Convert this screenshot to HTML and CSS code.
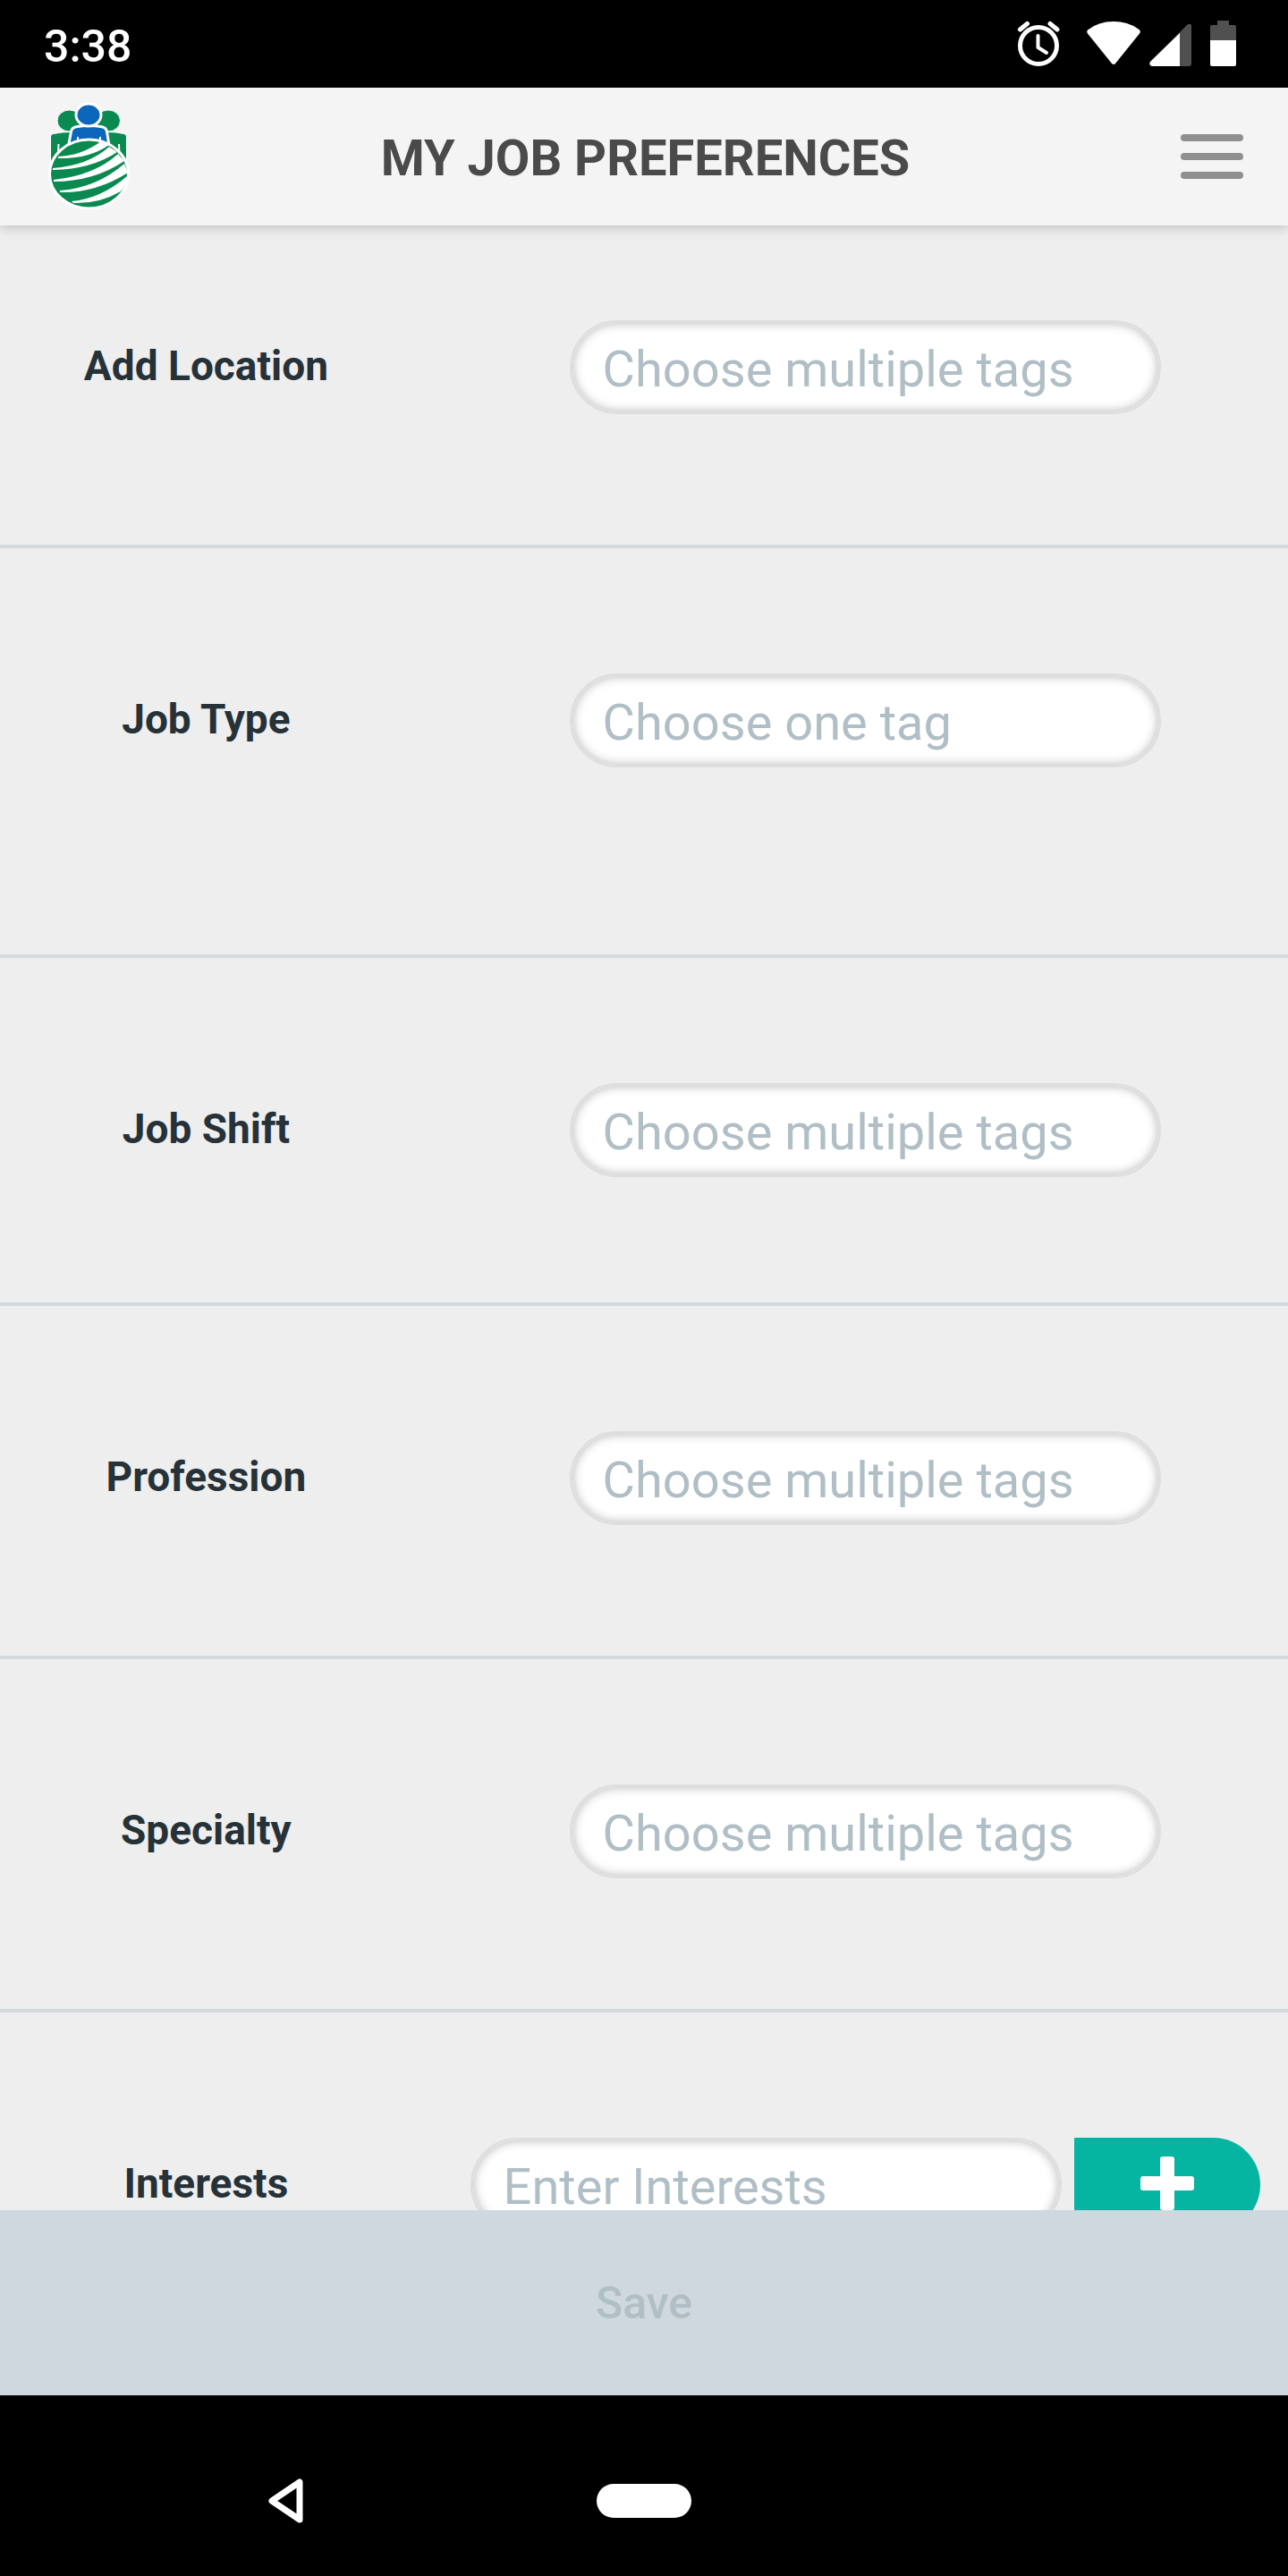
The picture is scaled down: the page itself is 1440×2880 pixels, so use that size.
FILE: index.html
```html
<!DOCTYPE html>
<html lang="en">
<head>
    <meta charset="UTF-8">
    <meta name="viewport" content="width=device-width, initial-scale=1.0">
    <title>My Job Preferences</title>

    <link rel="stylesheet" href="styles.css">
</head>
<body>
    <div class="status-bar">
        <span class="clock">3:38</span>
        <svg class="status-icons" viewBox="0 0 248 54" aria-hidden="true">
            <!-- alarm -->
            <g fill="none" stroke="#fff" stroke-linecap="round">
                <circle cx="25" cy="28" r="20.500" stroke-width="5"/>
                <path d="M24.500 17v13l9.500 6" stroke-width="4" stroke-linejoin="round"/>
                <path d="M4.500 10l8-6.500M46 10l-8-6.500" stroke-width="5"/>
            </g>
            <!-- wifi -->
            <path d="M80 10.500Q92 1 109 1t29 9.500q1.500 2 0 4L111 48q-2 2-4 0L80 14.500q-1.500-2 0-4z" fill="#fff"/>
            <!-- signal -->
            <path d="M150 46L191 5q5-3 5 1v42q0 3-3 3h-41q-4-1-2-5z" fill="#505050"/>
            <path d="M150 46l33-32v37h-31q-4-1-2-5z" fill="#fff"/>
            <!-- battery -->
            <path d="M217 22V7q0-2 2-2h6V0h13v5h6q2 0 2 2v15z" fill="#505050"/>
            <path d="M217 22h29v27q0 2-2 2h-25q-2 0-2-2z" fill="#fff"/>
        </svg>
    </div>

    <header class="header">
        <svg class="logo" viewBox="0 0 92 122" role="img" aria-label="Home">
            <g fill="#0a8a50" stroke="#fff" stroke-width="1">
                <path d="M3.500 67V39q0-3 3-3.500 10-2 19-2h42q10 0 18 2 3 .5 3 3.500v28z"/>
                <ellipse cx="24.500" cy="21" rx="13.500" ry="12"/>
                <ellipse cx="68" cy="21" rx="13.500" ry="12"/>
            </g>
            <path d="M12 60l.5-13M80.500 60l-.5-13" stroke="#fff" stroke-width="2"/>
            <path d="M23 52l3.500-19q1-5 7-5.500 13-2 26 0 6 .5 7 5.500l3 19z" fill="#0b67b9" stroke="#fff" stroke-width="3"/>
            <ellipse cx="46" cy="14.500" rx="14" ry="12.500" fill="#0b67b9" stroke="#fff" stroke-width="3"/>
            <path d="M34 48v-9M59 48v-9" stroke="#fff" stroke-width="2"/>
            <ellipse cx="46.500" cy="80.500" rx="44" ry="38.500" fill="#0a8a50" stroke="#fff" stroke-width="3"/>
            <g fill="#fff">
                <path d="M12 61Q38 60 60 44L69 48Q46 64 12 63z"/>
                <path d="M6 74Q46 71 69 50L78 56Q50 75 6 76z"/>
                <path d="M7 87Q53 82 79 58L86 66Q52 89 7 89z"/>
                <path d="M14 99Q55 96 86 69L90 79Q54 102 14 101z"/>
                <path d="M27 111Q60 108 89 83Q89 93 82 100Q58 114 29 113z"/>
            </g>
        </svg>
        <h1 class="title">MY JOB PREFERENCES</h1>
        <button class="menu" type="button" aria-label="Menu">
            <span class="bar"></span>
            <span class="bar"></span>
            <span class="bar"></span>
        </button>
    </header>

    <form class="preferences" id="preferences">
        <div class="row first">
            <label for="location">Add Location</label>
            <div class="field">
                <input class="tags" id="location" type="text" placeholder="Choose multiple tags">
            </div>
        </div>
        <div class="row tall">
            <label for="job-type">Job Type</label>
            <div class="field">
                <input class="tags" id="job-type" type="text" placeholder="Choose one tag">
            </div>
        </div>
        <div class="row short">
            <label for="job-shift">Job Shift</label>
            <div class="field">
                <input class="tags" id="job-shift" type="text" placeholder="Choose multiple tags">
            </div>
        </div>
        <div class="row">
            <label for="profession">Profession</label>
            <div class="field">
                <input class="tags" id="profession" type="text" placeholder="Choose multiple tags">
            </div>
        </div>
        <div class="row">
            <label for="specialty">Specialty</label>
            <div class="field">
                <input class="tags" id="specialty" type="text" placeholder="Choose multiple tags">
            </div>
        </div>
        <div class="row">
            <label for="interests">Interests</label>
            <div class="field">
                <input class="tags" id="interests" type="text" placeholder="Enter Interests">
                <button class="add" type="button" aria-label="Add interest">
                    <svg viewBox="0 0 60 60" aria-hidden="true">
                        <path d="M25 0h10q3 0 3 3v19h19q3 0 3 3v10q0 3-3 3H38v19q0 3-3 3H25q-3 0-3-3V38H3q-3 0-3-3V25q0-3 3-3h19V3q0-3 3-3z" fill="#fff"/>
                    </svg>
                </button>
            </div>
        </div>
    </form>

    <button class="save" type="submit" form="preferences" disabled>Save</button>

    <nav class="system-nav">
        <button class="back" type="button" aria-label="Back">
            <svg viewBox="0 0 40 50" aria-hidden="true">
                <path d="M35 4v42L4 25z" fill="none" stroke="#fff" stroke-width="7" stroke-linejoin="round"/>
            </svg>
        </button>
        <button class="home" type="button" aria-label="Home"></button>
    </nav>
</body>
</html>
```
FILE: styles.css
```css
*{
    margin: 0;
    padding: 0;
    box-sizing: border-box;
}

body{
    height: 100vh;
    display: flex;
    flex-direction: column;
    background: #eee;
    font-family: Roboto, "Liberation Sans", sans-serif;
    overflow: hidden;
}

button{
    border: 0;
    background: none;
    font-family: inherit;
}

.status-bar{
    flex: none;
    height: 98px;
    padding: 2px 56px 0 49px;
    display: flex;
    justify-content: space-between;
    align-items: center;
    background: #000;
}

.clock{
    padding-top: 4px;
    color: #fff;
    font-size: 50px;
    font-weight: 500;
}

.status-icons{
    width: 248px;
    height: 54px;
}

/* above the list, so that its shadow falls on it */
.header{
    flex: none;
    height: 154px;
    padding: 0 50px 0 53px;
    position: relative;
    display: grid;
    grid-template-columns: 92px 1fr 92px;
    align-items: center;
    background: #f4f4f4;
    box-shadow: 0 3px 12px rgba(0, 0, 0, 0.18);
}

.logo{
    width: 92px;
    height: 122px;
}

.title{
    padding-top: 4px;
    text-align: center;
    color: #4a4a4a;
    font-size: 56px;
    font-weight: 700;
}

.menu{
    justify-self: end;
    width: 70px;
    display: flex;
    flex-direction: column;
    gap: 13px;
}

.bar{
    height: 8px;
    border-radius: 4px;
    background: #8f8f8f;
}

.preferences{
    flex: 1;
    min-height: 0;
    overflow: hidden;
}

.row{
    padding: 140px 0 146px;
    display: grid;
    grid-template-columns: 32% 1fr;
    column-gap: 34px;
    align-items: center;
    border-bottom: 4px solid #d3d9dd;
}

.first{
    padding-top: 106px;
}

.tall{
    padding-bottom: 209px;
}

.short{
    padding-bottom: 140px;
}

.row label{
    padding-bottom: 4px;
    text-align: center;
    color: #263238;
    font-size: 46px;
    font-weight: 700;
}

.field{
    display: flex;
    justify-content: center;
    gap: 14px;
}

.tags{
    width: 70%;
    height: 105px;
    padding: 4px 34px 0;
    border: 3px solid #dedede;
    border-radius: 53px;
    background: #fff;
    box-shadow: inset 0 0 12px rgba(0, 0, 0, 0.3);
    color: #263238;
    font-family: inherit;
    font-size: 56px;
}

.tags::placeholder{
    color: #b0bec5;
    opacity: 1;
}

.add{
    width: 22%;
    height: 105px;
    padding-bottom: 4px;
    display: flex;
    justify-content: center;
    align-items: center;
    border-radius: 0 53px 53px 0;
    background: #06b4a2;
}

.add svg{
    width: 60px;
    height: 60px;
}

.save{
    flex: none;
    height: 207px;
    background: #cfd8df;
    color: #b0bec5;
    font-size: 50px;
    font-weight: 500;
}

.system-nav{
    flex: none;
    height: 202px;
    padding-top: 34px;
    display: grid;
    grid-template-columns: 1fr 106px 1fr;
    align-items: center;
    background: #000;
}

.back{
    justify-self: center;
    width: 40px;
    height: 50px;
    margin-right: 28px;
}

.back svg{
    display: block;
}

.home{
    height: 38px;
    border-radius: 19px;
    background: #fff;
}
```
